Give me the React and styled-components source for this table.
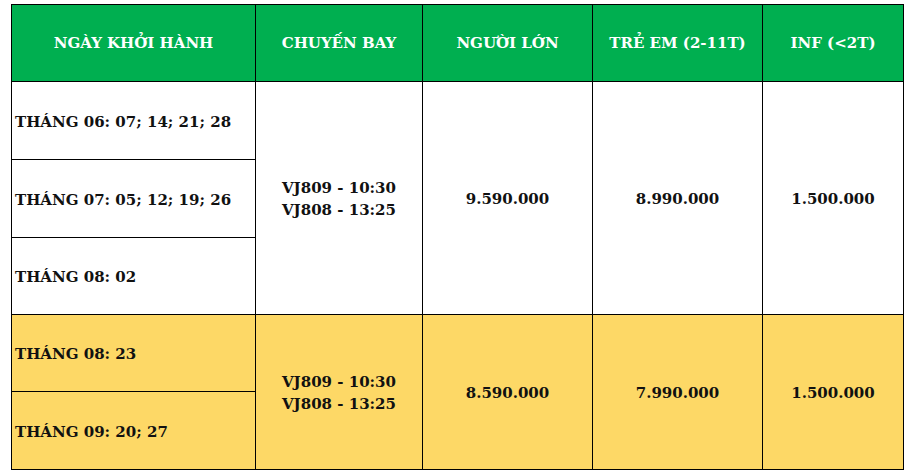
import React from 'react'
import styled, { createGlobalStyle } from 'styled-components'

const GlobalStyle = createGlobalStyle`
    body {
        margin: 0;
        background: #ffffff;
        font-family: "DejaVu Serif", "Liberation Serif", serif;
    }
`

const Table = styled.table`
    border-collapse: collapse;
    margin: 4px 0 0 11px;
    width: 892px;
    table-layout: fixed;
    font-weight: bold;
    font-size: 15px;
    color: #111111;
`

const Th = styled.th`
    background: #00af50;
    color: #ffffff;
    border: 1px solid #000;
    height: 76px;
    padding: 0;
    text-align: center;
    font-size: 15px;
`

const Tr = styled.tr`
    height: ${p => p.h}px;
`

const Td = styled.td`
    border: 1px solid #000;
    background: ${p => (p.gold ? '#fdd866' : '#ffffff')};
    text-align: ${p => (p.left ? 'left' : 'center')};
    padding: ${p => (p.left ? '2px 0 0 3px' : '2px 0 0 0')};
    line-height: 22px;
    vertical-align: middle;
    ${p => p.grayTop && 'border-top-color: #c8c8c8;'}
`

const groups = [
    {
        gold: false,
        dates: ['THÁNG 06: 07; 14; 21; 28', 'THÁNG 07: 05; 12; 19; 26', 'THÁNG 08: 02'],
        heights: [78, 78, 77],
        adult: '9.590.000',
        child: '8.990.000',
        inf: '1.500.000',
    },
    {
        gold: true,
        dates: ['THÁNG 08: 23', 'THÁNG 09: 20; 27'],
        heights: [77, 78],
        adult: '8.590.000',
        child: '7.990.000',
        inf: '1.500.000',
    },
]

export default function App() {
    return (
        <>
            <GlobalStyle />
            <Table>
                <colgroup>
                    <col style={{ width: 244 }} />
                    <col style={{ width: 167 }} />
                    <col style={{ width: 170 }} />
                    <col style={{ width: 170 }} />
                    <col style={{ width: 141 }} />
                </colgroup>
                <thead>
                    <tr>
                        <Th>NGÀY KHỞI HÀNH</Th>
                        <Th>CHUYẾN BAY</Th>
                        <Th>NGƯỜI LỚN</Th>
                        <Th>TRẺ EM (2-11T)</Th>
                        <Th>INF (&lt;2T)</Th>
                    </tr>
                </thead>
                <tbody>
                    {groups.map((g, gi) =>
                        g.dates.map((d, i) => (
                            <Tr key={gi + '-' + i} h={g.heights[i]}>
                                <Td left gold={g.gold}>{d}</Td>
                                {i === 0 && (
                                    <>
                                        <Td gold={g.gold} rowSpan={g.dates.length}>
                                            VJ809 - 10:30<br />VJ808 - 13:25
                                        </Td>
                                        <Td gold={g.gold} rowSpan={g.dates.length}>{g.adult}</Td>
                                        <Td gold={g.gold} grayTop={gi === 1} rowSpan={g.dates.length}>{g.child}</Td>
                                        <Td gold={g.gold} grayTop={gi === 1} rowSpan={g.dates.length}>{g.inf}</Td>
                                    </>
                                )}
                            </Tr>
                        ))
                    )}
                </tbody>
            </Table>
        </>
    )
}
